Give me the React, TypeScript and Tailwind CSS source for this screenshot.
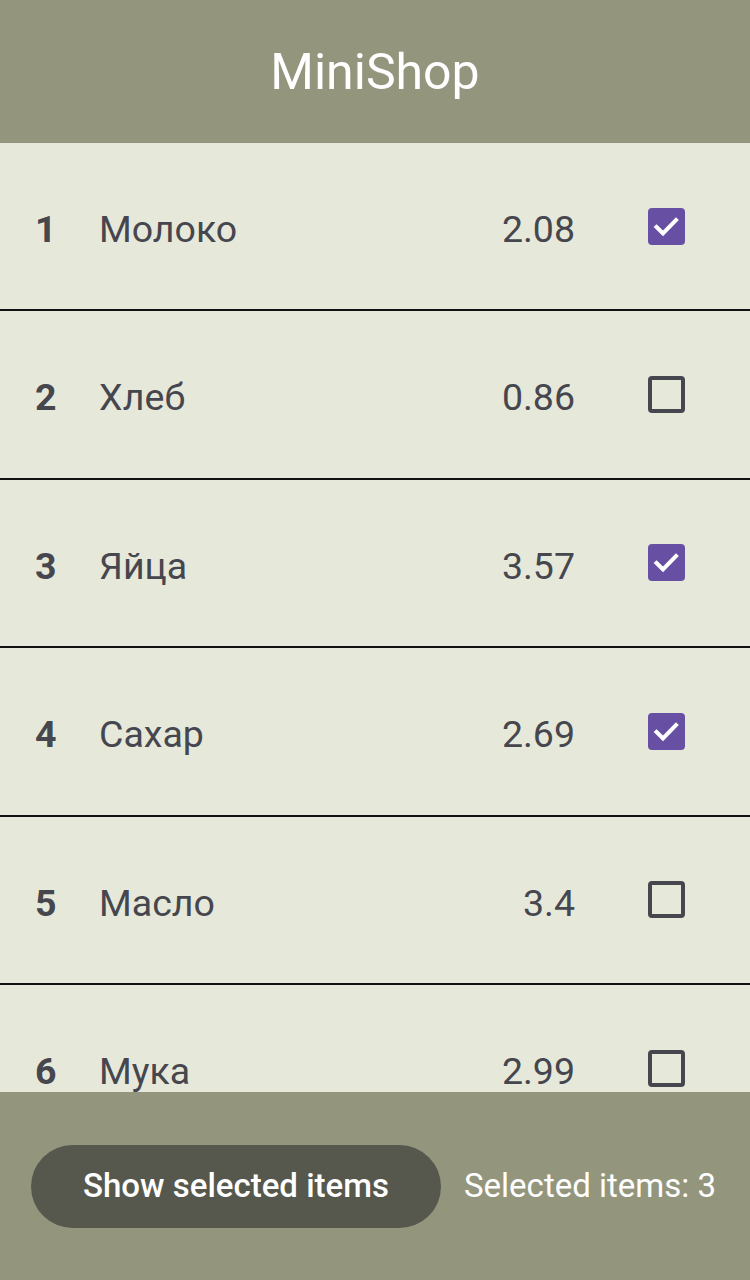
import { useState } from "react"

type Item = { id: number; name: string; price: string }

const items: Item[] = [
  { id: 1, name: "Молоко", price: "2.08" },
  { id: 2, name: "Хлеб", price: "0.86" },
  { id: 3, name: "Яйца", price: "3.57" },
  { id: 4, name: "Сахар", price: "2.69" },
  { id: 5, name: "Масло", price: "3.4" },
  { id: 6, name: "Мука", price: "2.99" },
]

function CheckBox({ checked, onClick }: { checked: boolean; onClick: () => void }) {
  if (checked) {
    return (
      <button
        onClick={onClick}
        className="w-[37px] h-[37px] rounded-[4px] bg-[#6750a4] flex items-center justify-center"
      >
        <svg width="37" height="37" viewBox="0 0 37 37" fill="none">
          <path d="M8.5 19l6.5 6.5L28 12" stroke="white" strokeWidth="4" strokeLinecap="square" />
        </svg>
      </button>
    )
  }
  return (
    <button
      onClick={onClick}
      className="w-[37px] h-[37px] rounded-[4px] border-[4px] border-[#46464f]"
    />
  )
}

export default function App() {
  const [selected, setSelected] = useState<number[]>([1, 3, 4])

  const toggle = (id: number) =>
    setSelected((s) => (s.includes(id) ? s.filter((x) => x !== id) : [...s, id]))

  return (
    <div
      className="w-[750px] h-[1280px] flex flex-col bg-[#e6e9da]"
      style={{ fontFamily: "Roboto, sans-serif" }}
    >
      {/* Header */}
      <div className="h-[143px] shrink-0 bg-[#94957d] flex items-center justify-center">
        <h1 className="text-[50px] text-white leading-none">MiniShop</h1>
      </div>

      {/* List */}
      <div className="flex-1 overflow-hidden">
        {items.map((item) => (
          <div
            key={item.id}
            className="h-[168.4px] border-b-[2.5px] border-[#111] flex items-center pt-[6px] text-[#46464f] text-[37.5px]"
          >
            <span className="w-[64px] pl-[35px] box-content font-bold">{item.id}</span>
            <span className="flex-1">{item.name}</span>
            <span className="w-[150px] text-right">{item.price}</span>
            <div className="w-[175px] flex justify-start pl-[73px] -mt-[6px]">
              <CheckBox checked={selected.includes(item.id)} onClick={() => toggle(item.id)} />
            </div>
          </div>
        ))}
      </div>

      {/* Footer */}
      <div className="h-[188px] shrink-0 bg-[#94957d] flex items-center pl-[31px]">
        <button className="w-[410px] h-[83px] rounded-full bg-[#56584d] text-white text-[33px] font-medium">
          Show selected items
        </button>
        <span className="ml-[23px] text-white text-[33px]">Selected items: {selected.length}</span>
      </div>
    </div>
  )
}
